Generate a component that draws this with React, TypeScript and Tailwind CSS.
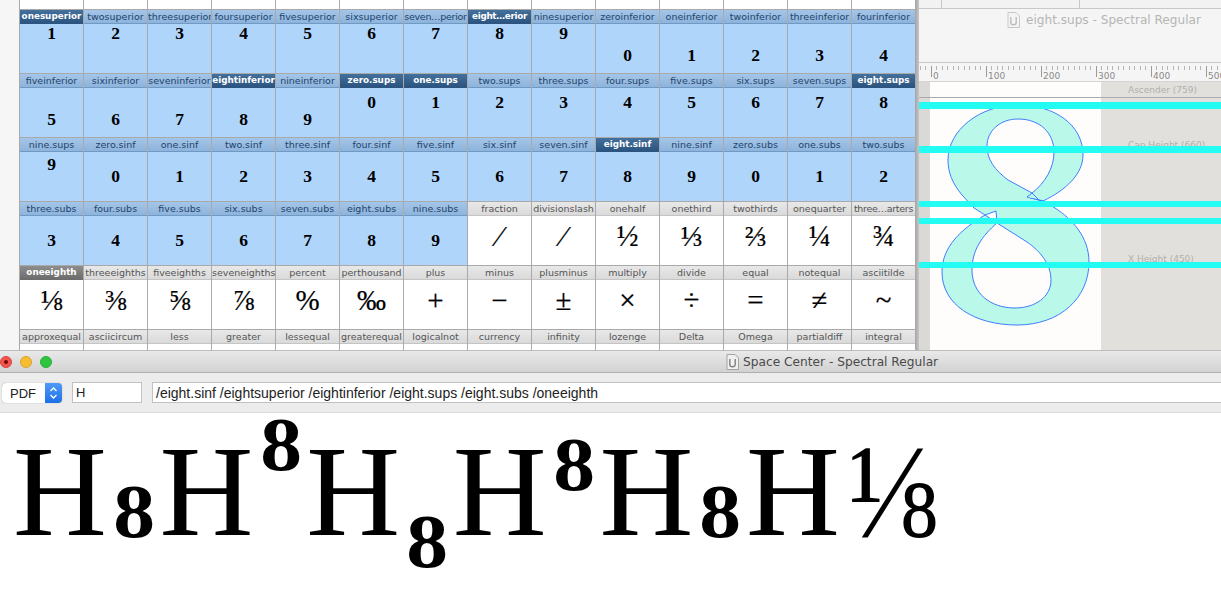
const serif = "font-['Liberation_Serif',serif]";
const ui = "font-['DejaVu_Sans',sans-serif]";

type Cell = { label: string; glyph?: string; pos?: string; sel?: boolean; blue?: boolean; big?: boolean };

const sup = "pt-px";
const sups = "pt-[6px]";
const inf = "pt-[23px]";
const sub = "pt-[16px]";

function blue(label: string, glyph: string, pos: string, sel = false): Cell {
  return { label, glyph, pos, sel, blue: true };
}
function frac(label: string, glyph: string, sel = false): Cell {
  return { label, glyph, sel, big: true };
}

const rows: Cell[][] = [
  [
    blue("onesuperior", "1", sup, true),
    blue("twosuperior", "2", sup),
    blue("threesuperior", "3", sup),
    blue("foursuperior", "4", sup),
    blue("fivesuperior", "5", sup),
    blue("sixsuperior", "6", sup),
    blue("seven…perior", "7", sup),
    blue("eight…erior", "8", sup, true),
    blue("ninesuperior", "9", sup),
    blue("zeroinferior", "0", inf),
    blue("oneinferior", "1", inf),
    blue("twoinferior", "2", inf),
    blue("threeinferior", "3", inf),
    blue("fourinferior", "4", inf),
  ],
  [
    blue("fiveinferior", "5", inf),
    blue("sixinferior", "6", inf),
    blue("seveninferior", "7", inf),
    blue("eightinferior", "8", inf, true),
    blue("nineinferior", "9", inf),
    blue("zero.sups", "0", sups, true),
    blue("one.sups", "1", sups, true),
    blue("two.sups", "2", sups),
    blue("three.sups", "3", sups),
    blue("four.sups", "4", sups),
    blue("five.sups", "5", sups),
    blue("six.sups", "6", sups),
    blue("seven.sups", "7", sups),
    blue("eight.sups", "8", sups, true),
  ],
  [
    blue("nine.sups", "9", "pt-[4px]"),
    blue("zero.sinf", "0", sub),
    blue("one.sinf", "1", sub),
    blue("two.sinf", "2", sub),
    blue("three.sinf", "3", sub),
    blue("four.sinf", "4", sub),
    blue("five.sinf", "5", sub),
    blue("six.sinf", "6", sub),
    blue("seven.sinf", "7", sub),
    blue("eight.sinf", "8", sub, true),
    blue("nine.sinf", "9", sub),
    blue("zero.subs", "0", sub),
    blue("one.subs", "1", sub),
    blue("two.subs", "2", sub),
  ],
  [
    blue("three.subs", "3", sub),
    blue("four.subs", "4", sub),
    blue("five.subs", "5", sub),
    blue("six.subs", "6", sub),
    blue("seven.subs", "7", sub),
    blue("eight.subs", "8", sub),
    blue("nine.subs", "9", sub),
    frac("fraction", "⁄"),
    frac("divisionslash", "∕"),
    frac("onehalf", "½"),
    frac("onethird", "⅓"),
    frac("twothirds", "⅔"),
    frac("onequarter", "¼"),
    frac("three…arters", "¾"),
  ],
  [
    frac("oneeighth", "⅛", true),
    frac("threeeighths", "⅜"),
    frac("fiveeighths", "⅝"),
    frac("seveneighths", "⅞"),
    frac("percent", "%"),
    frac("perthousand", "‰"),
    frac("plus", "+"),
    frac("minus", "−"),
    frac("plusminus", "±"),
    frac("multiply", "×"),
    frac("divide", "÷"),
    frac("equal", "="),
    frac("notequal", "≠"),
    frac("asciitilde", "~"),
  ],
  [
    frac("approxequal", ""),
    frac("asciicircum", ""),
    frac("less", ""),
    frac("greater", ""),
    frac("lessequal", ""),
    frac("greaterequal", ""),
    frac("logicalnot", ""),
    frac("currency", ""),
    frac("infinity", ""),
    frac("lozenge", ""),
    frac("Delta", ""),
    frac("Omega", ""),
    frac("partialdiff", ""),
    frac("integral", ""),
  ],
];

function labelStyle(c: Cell) {
  if (c.sel && c.blue) return "bg-gradient-to-b from-[#44709c] to-[#2b5580] text-white font-bold text-[8.800px] border-b-[#2b5580]";
  if (c.sel) return "bg-gradient-to-b from-[#8e8e8e] to-[#6c6c6c] text-white font-bold text-[8.800px] border-b-[#6c6c6c]";
  if (c.blue) return "bg-gradient-to-b from-[#a3c5e8] to-[#8fb4dc] text-[#21446b] text-[9.500px] border-b-[#6f9ac6]";
  return "bg-gradient-to-b from-[#e8e8e8] to-[#dadada] text-[#555555] text-[9.500px] border-b-[#c4c4c4]";
}

function GlyphCell({ c }: { c: Cell }) {
  return (
    <div className="flex flex-col h-16 border-l border-t border-[#a9a9a9]">
      <div className={`h-[14px] shrink-0 border-b leading-[13px] text-center whitespace-nowrap overflow-hidden ${c.label.includes("…") ? "tracking-[-0.3px]" : ""} ${ui} ${labelStyle(c)}`}>
        {c.label}
      </div>
      <div className={`flex-1 text-center text-black ${serif} ${c.blue ? "bg-[#afd5fb]" : "bg-white"}`}>
        {c.blue ? (
          <div className={`text-[17.500px] leading-4 font-bold ${c.pos}`}>{c.glyph}</div>
        ) : (
          <div className="text-[29px] leading-[49px] -mt-[4px] [-webkit-text-stroke:0.2px_black]">{c.glyph}</div>
        )}
      </div>
    </div>
  );
}

function Ruler() {
  const ticks = Array.from({ length: 56 }, (_, i) => i);
  return (
    <svg width="302" height="20" className="block" shapeRendering="crispEdges">
      {ticks.map((i) => {
        const x = 12 + (i - 2) * 5.5;
        return <line key={i} x1={x} x2={x} y1={3} y2={i % 10 === 2 ? 14 : 7} stroke={i % 10 === 2 ? "#9a9a9a" : "#b4b4b4"} />;
      })}
      {["0", "100", "200", "300", "400", "500"].map((t, i) => (
        <text key={t} x={14 + i * 55} y={16} fontSize="9" fill="#8a8a8a" fontFamily="DejaVu Sans">{t}</text>
      ))}
    </svg>
  );
}

function DocIcon({ light }: { light?: boolean }) {
  return (
    <svg width="13" height="16" viewBox="0 0 13 16" className="shrink-0">
      <path d="M1 .5h8l3.500 3.500v11.500h-11.500z" fill={light ? "#f4f4f4" : "#f0f0f0"} stroke={light ? "#c8c8c8" : "#a2a2a2"} />
      <path d="M3.800 5v5.500c0 3 5.400 3 5.400 0V5" fill="none" stroke={light ? "#bcbcbc" : "#808080"} strokeWidth="1.400" />
    </svg>
  );
}

// eight.sups drawn in panel coordinates (panel starts at x=919, y=82)
function GlyphOutline() {
  return (
    <svg width="302" height="268" viewBox="919 82 302 268" className="absolute left-0 top-0">
      <path
        d="M985 215 C962 229 942 246 942 272 C942 305 975 325 1017 325 C1060 325 1089 298 1089 262 C1089 237 1072 219 1055 208 L1043 201 L1027 197 L1043 201 C1066 190 1083 174 1083 155 C1083 125 1055 105 1018 105 C980 105 948 130 948 160 C948 172 952 183 962 195 L974 208 L985 215 L996 211 L997 223 L985 215 Z"
        fill="#baf9e9"
        stroke="#3f7dff"
      />
      <path
        d="M997 223 L1027 242 C1040 251 1051 264 1051 280 C1051 297 1035 308 1015 308 C990 308 972 293 972 270 C972 250 982 236 997 223 Z"
        fill="#fefdfb"
        stroke="#3f7dff"
      />
      <path
        d="M1018 119 C1040 119 1054 133 1054 152 C1054 168 1045 183 1032 193 L1008 180 C995 170 987 160 987 146 C987 131 1000 119 1018 119 Z"
        fill="#fefdfb"
        stroke="#3f7dff"
      />
      <path d="M1027 197 L1032 193 L1038 199" fill="#baf9e9" stroke="#3f7dff" />
    </svg>
  );
}

const guideTops = ["top-[20px]", "top-[64px]", "top-[119px]", "top-[136px]", "top-[180px]"];
const guideHeights = ["h-[7px]", "h-[7px]", "h-[6px]", "h-[6px]", "h-[6px]"];

function BigEight({ mt }: { mt: string }) {
  return <span className={`block shrink-0 w-[48.600px] pl-[2px] leading-none text-[76px] font-bold origin-left scale-x-[1.1] ${mt}`}>8</span>;
}

function H() {
  return <span className="block shrink-0 w-[98px] mt-[13px] leading-none text-[130px]">H</span>;
}

export default function App() {
  return (
    <div className="w-[1221px] h-[597px] overflow-hidden bg-white flex flex-col">
      {/* font overview + glyph window behind */}
      <div className="h-[350px] shrink-0 flex overflow-hidden">
        <div className="w-[19px] shrink-0 bg-[#f6f6f6]" />
        <div className="w-[896px] shrink-0 overflow-hidden">
          <div className="grid grid-cols-[repeat(14,64px)] h-[9px]">
            {rows[0].map((c) => (
              <div key={c.label} className="border-l border-[#a9a9a9] bg-white" />
            ))}
          </div>
          <div className="grid grid-cols-[repeat(14,64px)]">
            {rows.flat().map((c) => (
              <GlyphCell key={c.label} c={c} />
            ))}
          </div>
        </div>
        <div className="w-1 shrink-0 bg-gradient-to-r from-[#a4a4a4] to-[#c6c6c6]" />
        <div className="flex-1 flex flex-col bg-[#f5f5f5]">
          <div className="h-[9px] shrink-0 flex border-b border-[#c8c8c8] bg-[#f2f2f2]">
            <div className="w-[23px] border-r border-[#c8c8c8]" />
            <div className="w-[138px] border-r border-[#c8c8c8]" />
          </div>
          <div className="h-[54px] shrink-0 flex items-start gap-[6px] pl-[88px] pt-[3px] border-b border-[#c8c8c8]">
            <DocIcon light />
            <span className={`text-[12.100px] leading-4 text-[#b6b6b6] whitespace-nowrap ${ui}`}>eight.sups - Spectral Regular</span>
          </div>
          <div className="h-[19px] shrink-0 border-b border-[#d4d4d4]">
            <Ruler />
          </div>
          <div className="flex-1 relative flex bg-[#e1e0dc]">
            <div className="w-[11px] bg-[#dbd9d5]" />
            <div className="w-[171px] bg-[#fefdfb]" />
            <GlyphOutline />
            <div className="absolute left-0 right-0 top-[15px] h-px bg-[#ababab]" />
            <span className={`absolute left-[209px] top-[2px] text-[9px] leading-3 text-[#b0b0ac] ${ui}`}>Ascender (759)</span>
            <span className={`absolute left-[209px] top-[57px] text-[9px] leading-3 text-[#b0b0ac] ${ui}`}>Cap Height (660)</span>
            <span className={`absolute left-[209px] top-[171px] text-[9px] leading-3 text-[#b0b0ac] ${ui}`}>X Height (450)</span>
            {guideTops.map((t, i) => (
              <div key={t} className={`absolute left-0 right-0 bg-[#24fbf2] ${t} ${guideHeights[i]}`} />
            ))}
          </div>
        </div>
      </div>

      {/* space center window */}
      <div className="h-[23px] shrink-0 relative flex items-center pl-[726px] pt-px border-t border-[#bdbdbd] border-b border-b-[#b0b0b0] bg-gradient-to-b from-[#e9e9e9] to-[#d2d2d2]">
        <div className="absolute left-0 top-[5px] flex gap-2">
          <div className="w-3 h-3 rounded-full bg-[#f5544c] border border-[#d8433c] flex items-center justify-center">
            <div className="w-1 h-1 rounded-full bg-[#6b0f0b]" />
          </div>
          <div className="w-3 h-3 rounded-full bg-[#f6bd31] border border-[#dca42a]" />
          <div className="w-3 h-3 rounded-full bg-[#30c53f] border border-[#2bad38]" />
        </div>
        <div className="flex items-center gap-[4px]">
          <DocIcon />
          <span className={`text-[12.200px] leading-4 text-[#4a4a4a] whitespace-nowrap ${ui}`}>Space Center - Spectral Regular</span>
        </div>
      </div>
      <div className="h-[40px] shrink-0 flex items-center pl-[2px] bg-[#ececec] border-b border-[#d8d8d8] font-['Liberation_Sans',sans-serif] text-[14px] text-[#222222]">
        <div className="w-[60px] h-[20px] flex rounded-[4px] bg-white shadow-[0_0_1px_rgba(0,0,0,0.5)] overflow-hidden">
          <span className="flex-1 pl-2 leading-[21px] text-[13px]">PDF</span>
          <div className="w-[17px] bg-gradient-to-b from-[#4f9bf8] to-[#1c6fe6] flex items-center justify-center">
            <svg width="9" height="14" viewBox="0 0 9 14" fill="none" stroke="#fff" strokeWidth="1.300">
              <path d="M1.500 5l3-3 3 3M1.500 9l3 3 3-3" />
            </svg>
          </div>
        </div>
        <div className="ml-[10px] w-[70px] h-[21px] border border-[#c2c2c2] bg-white pl-[3px] leading-[20px] text-[13px]">H</div>
        <div className="ml-[10px] flex-1 h-[21px] border border-[#c2c2c2] border-r-0 bg-white pl-[3px] leading-[20px] whitespace-nowrap">
          /eight.sinf /eightsuperior /eightinferior /eight.sups /eight.subs /oneeighth
        </div>
      </div>

      <div className={`flex-1 flex items-start pl-[13px] text-black ${serif}`}>
        <H />
        <BigEight mt="mt-[60px]" />
        <H />
        <BigEight mt="mt-[-7px]" />
        <H />
        <BigEight mt="mt-[90px]" />
        <H />
        <BigEight mt="mt-[13px]" />
        <H />
        <BigEight mt="mt-[60px]" />
        <H />
        <span className="block shrink-0 w-[100px] pl-[5px] mt-[10px] leading-none text-[136px] origin-left scale-x-[0.87]">⅛</span>
      </div>
    </div>
  );
}
